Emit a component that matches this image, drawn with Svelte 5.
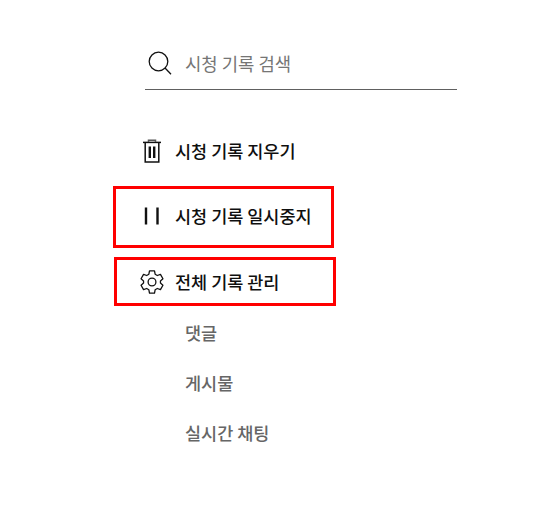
<script>
  const subs = ['댓글', '게시물', '실시간 채팅'];
</script>

<main class="panel">
  <div class="search">
    <svg class="search-icon" width="24" height="24" viewBox="0 0 24 24" fill="none" stroke="#111" stroke-width="1.3">
      <circle cx="10.5" cy="10.5" r="9.3" />
      <path d="M17 17l6 6.2" />
    </svg>
    <span class="placeholder">시청 기록 검색</span>
  </div>

  <div class="action clear">
    <svg class="icon" width="24" height="24" viewBox="0 0 24 24" fill="none" stroke="#111" stroke-width="1.5">
      <path d="M3 3.4h18" />
      <path d="M8.5 3V1.2h7V3" stroke="#555" />
      <path d="M5.2 4v19h13.6V4" />
      <path d="M9.8 7.5v11.5M14.2 7.5v11.5" stroke-width="2.4" />
    </svg>
    <span>시청 기록 지우기</span>
  </div>

  <div class="box pause">
    <svg class="icon" width="24" height="24" viewBox="0 0 24 24" fill="none" stroke="#111" stroke-width="2.4">
      <path d="M6 3.5v17M17.5 3.5v17" />
    </svg>
    <span>시청 기록 일시중지</span>
  </div>

  <div class="box manage">
    <svg class="icon" width="26" height="26" viewBox="0 0 24 24" fill="none" stroke="#111" stroke-width="1.2" stroke-linejoin="round">
      <circle cx="12" cy="12" r="3.6" />
      <path d="M9.7 1.8h4.6l.6 3 2 1.2 2.9-1 2.3 4-2.3 2v2l2.3 2-2.3 4-2.9-1-2 1.2-.6 3H9.7l-.6-3-2-1.2-2.9 1-2.3-4 2.3-2v-2l-2.3-2 2.3-4 2.9 1 2-1.2z" />
    </svg>
    <span>전체 기록 관리</span>
  </div>

  <ul class="subs">
    {#each subs as s}
      <li>{s}</li>
    {/each}
  </ul>
</main>

<style>
  :global(body) {
    margin: 0;
    background: #fff;
    font-family: "Noto Sans CJK KR", "Noto Sans", sans-serif;
  }
  .panel {
    width: 542px;
    height: 515px;
    box-sizing: border-box;
    padding: 40px 0 0 113px;
    color: #0f0f0f;
    font-size: 17.5px;
    font-weight: 500;
    overflow: hidden;
  }
  .search {
    width: 312px;
    height: 50px;
    margin-left: 32px;
    box-sizing: border-box;
    display: flex;
    align-items: center;
    border-bottom: 1px solid #606060;
    font-weight: 400;
    padding: 0 0 4px 3px;
  }
  .search-icon {
    flex: none;
    margin-right: 13px;
  }
  .placeholder {
    color: #757575;
    font-size: 17.8px;
    line-height: 24px;
  }
  .action,
  .box {
    display: flex;
    align-items: center;
    box-sizing: border-box;
  }
  .action span,
  .box span {
    line-height: 24px;
  }
  .clear {
    height: 24px;
    margin-top: 49px;
    padding-left: 27px;
  }
  .clear .icon {
    margin-right: 11px;
  }
  .box {
    border: 3px solid #f00;
  }
  .pause {
    width: 221px;
    height: 62px;
    margin-top: 23px;
    padding: 0 0 2px 24px;
  }
  .pause .icon {
    margin-right: 11px;
  }
  .manage {
    width: 222px;
    height: 49px;
    margin-top: 9px;
    margin-left: 1px;
    padding-left: 22px;
  }
  .manage .icon {
    margin-right: 10px;
  }
  .subs {
    list-style: none;
    margin: 2px 0 0 72px;
    padding: 0;
    color: #666;
  }
  .subs li {
    height: 50px;
    line-height: 50px;
  }
</style>
